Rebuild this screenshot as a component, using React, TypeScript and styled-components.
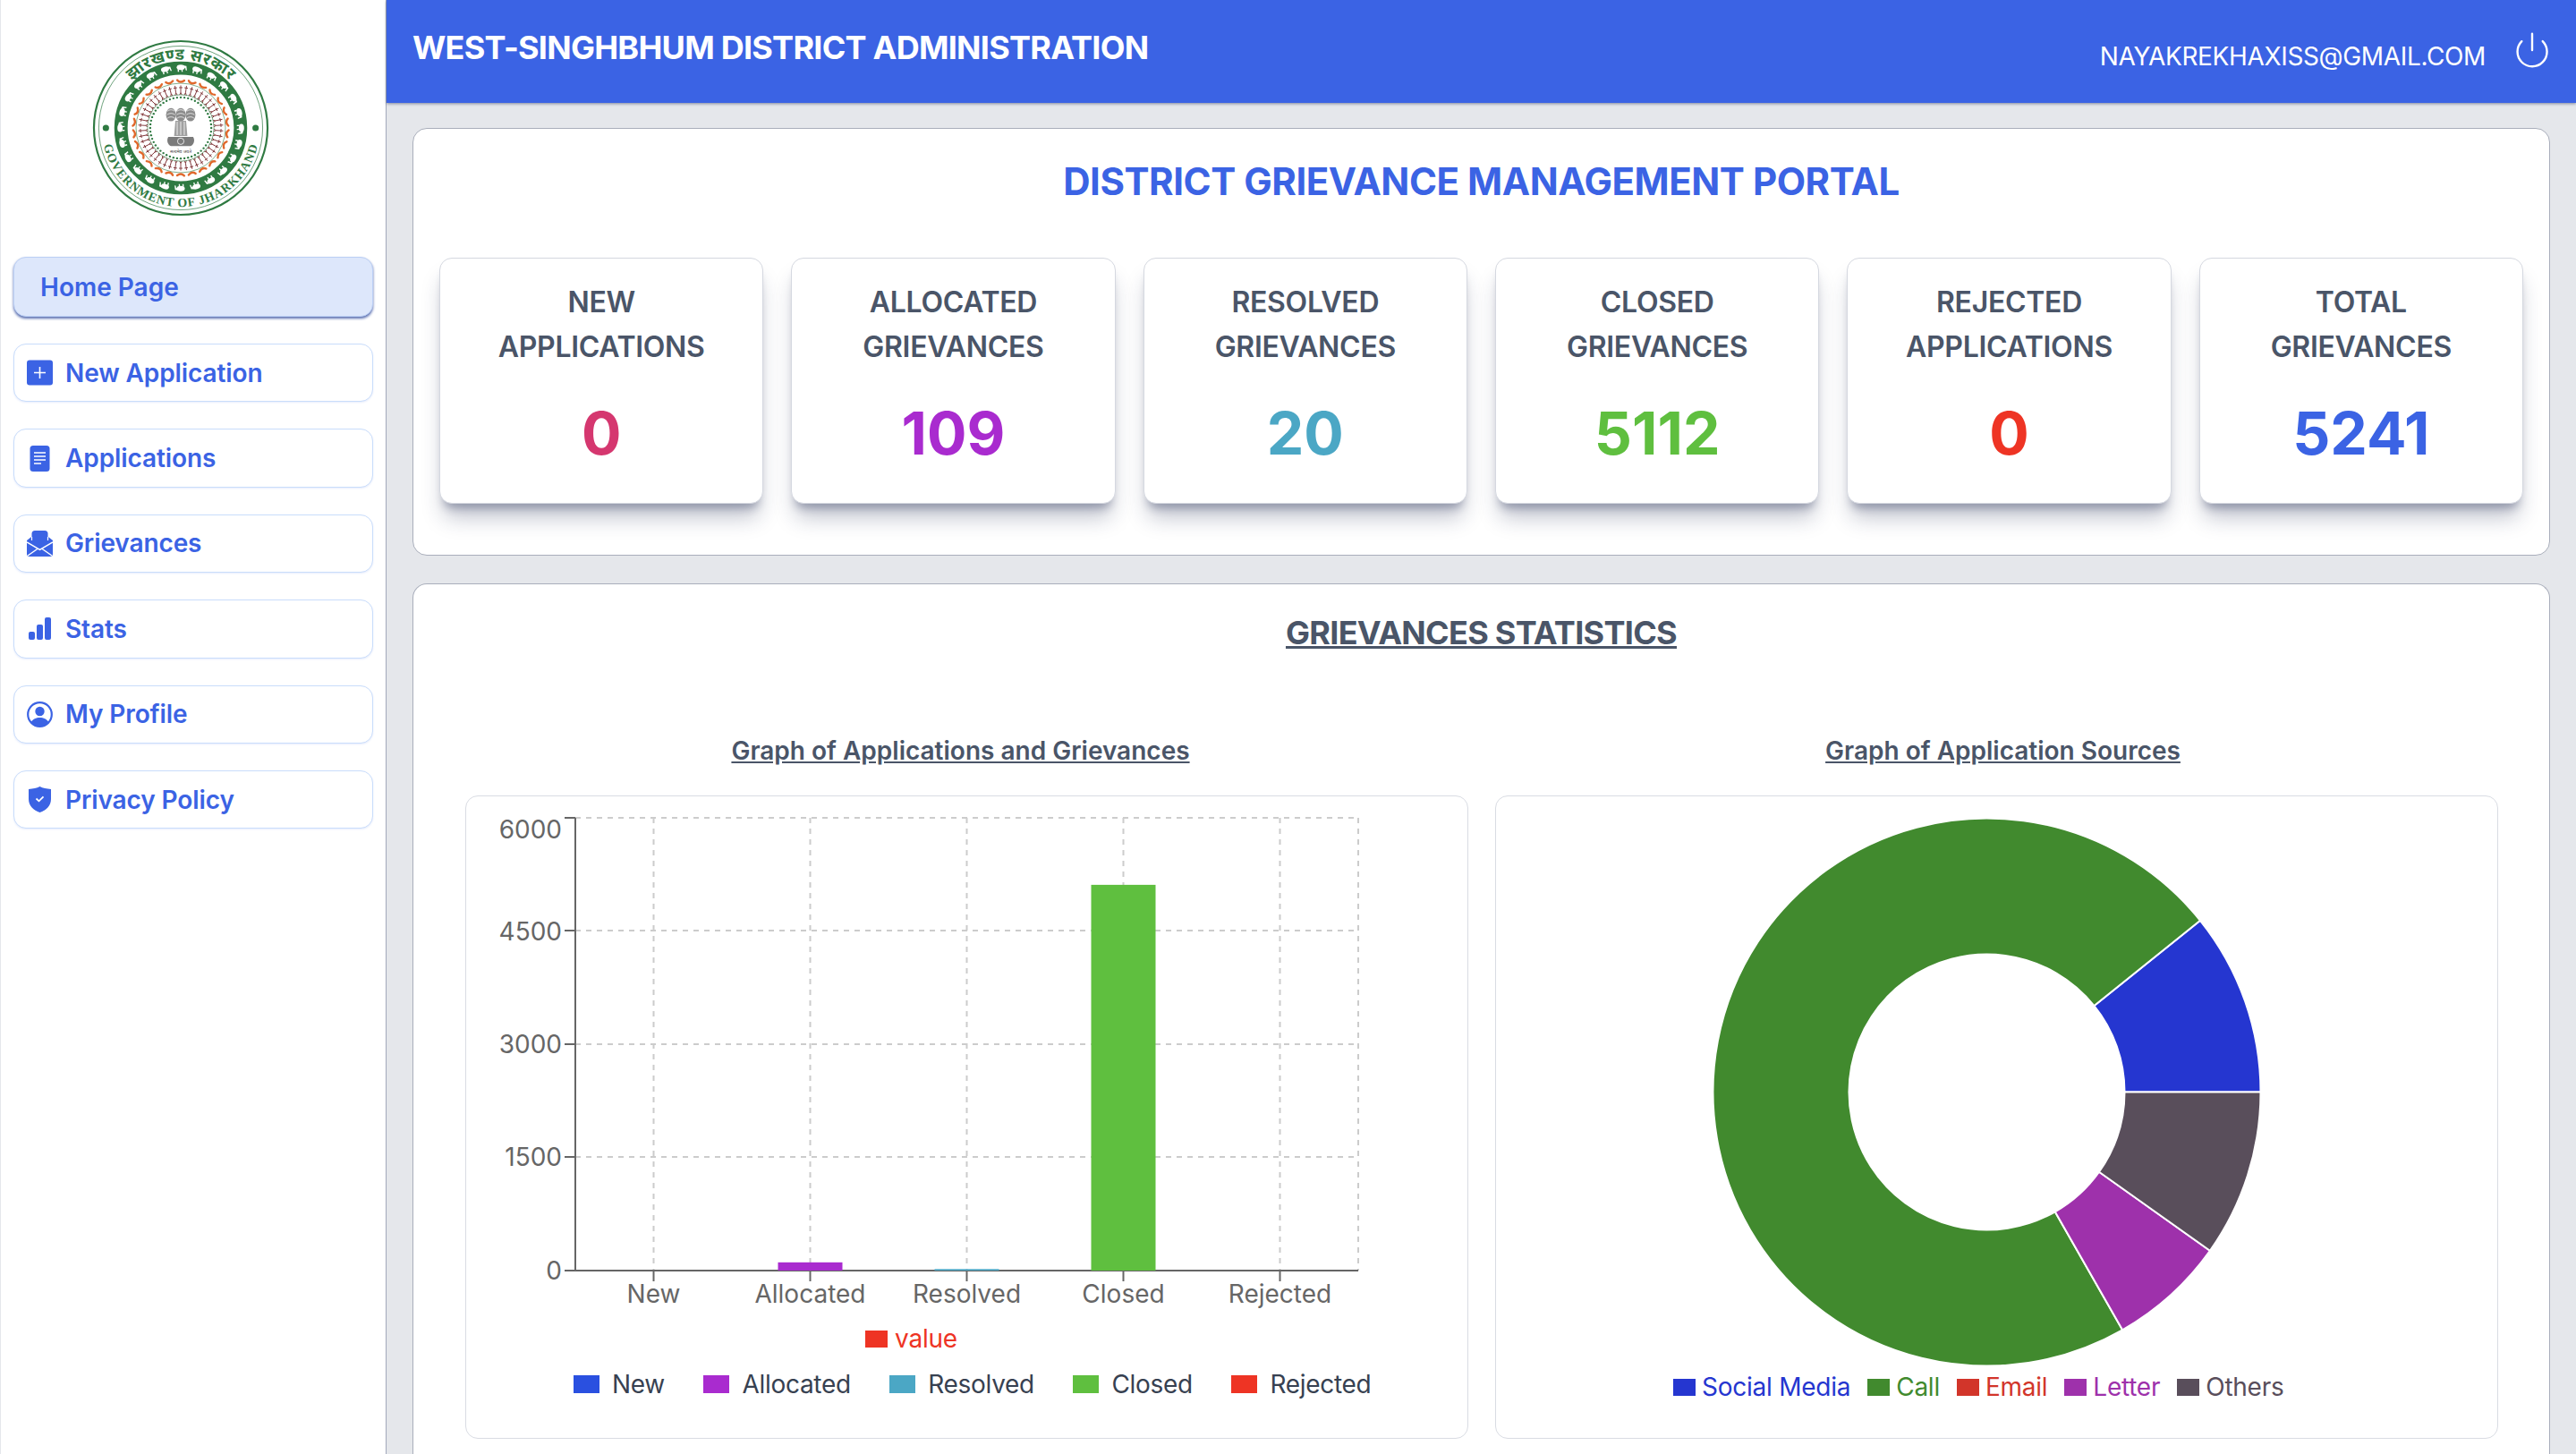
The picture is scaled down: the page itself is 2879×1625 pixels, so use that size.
import React from 'react'
import styled, { createGlobalStyle } from 'styled-components'
import { Power } from 'lucide-react'

const BLUE = '#3b63e4'

const GlobalStyle = createGlobalStyle`
  * {
    box-sizing: border-box;
  }
  html, body {
    margin: 0;
    height: 100%;
    overflow: hidden;
    background: #e5e7eb;
    font-family: Inter, "Liberation Sans", sans-serif;
  }
`

const stats = [
  { top: 'NEW', bottom: 'APPLICATIONS', value: '0', color: '#d5376f' },
  { top: 'ALLOCATED', bottom: 'GRIEVANCES', value: '109', color: '#a92bcf' },
  { top: 'RESOLVED', bottom: 'GRIEVANCES', value: '20', color: '#4ba7c5' },
  { top: 'CLOSED', bottom: 'GRIEVANCES', value: '5112', color: '#5fbf3f' },
  { top: 'REJECTED', bottom: 'APPLICATIONS', value: '0', color: '#ee3424' },
  { top: 'TOTAL', bottom: 'GRIEVANCES', value: '5241', color: BLUE },
]

const bars = [
  { label: 'New', value: 0, color: '#2a50e0' },
  { label: 'Allocated', value: 109, color: '#a92bcf' },
  { label: 'Resolved', value: 20, color: '#4ba7c5' },
  { label: 'Closed', value: 5112, color: '#5fbf3f' },
  { label: 'Rejected', value: 0, color: '#ee3424' },
]

const sources = [
  { label: 'Social Media', color: '#2536d0', from: 0, to: 38.8 },
  { label: 'Call', color: '#418a2e', from: 38.8, to: 299.7 },
  { label: 'Email', color: '#d2352a', from: 299.7, to: 299.7 },
  { label: 'Letter', color: '#9e31ab', from: 299.7, to: 324.6 },
  { label: 'Others', color: '#594e5b', from: 324.6, to: 360 },
]

function polar(cx: number, cy: number, r: number, deg: number) {
  const a = (deg * Math.PI) / 180
  return [cx + r * Math.cos(a), cy - r * Math.sin(a)]
}

function slicePath(cx: number, cy: number, r0: number, r1: number, from: number, to: number) {
  const [x1, y1] = polar(cx, cy, r1, from)
  const [x2, y2] = polar(cx, cy, r1, to)
  const [x3, y3] = polar(cx, cy, r0, to)
  const [x4, y4] = polar(cx, cy, r0, from)
  const large = to - from > 180 ? 1 : 0
  return `M${x1} ${y1}A${r1} ${r1} 0 ${large} 0 ${x2} ${y2}L${x3} ${y3}A${r0} ${r0} 0 ${large} 1 ${x4} ${y4}Z`
}

function range(n: number) {
  return Array.from({ length: n }, (_, i) => i)
}

function Lion({ x }: { x: number }) {
  return (
    <g>
      <ellipse cx={x} cy="85" rx="5.6" ry="7.5" fill="#8b8b8b" />
      <path d={`M${x - 4} 81c2-2 6-2 8 0M${x - 4.5} 85c3-2 6-2 9 0M${x - 4} 89c2-2 6-2 8 0`} stroke="#fff" strokeWidth="0.7" fill="none" />
    </g>
  )
}

function Emblem() {
  const green = '#2f7a42'
  return (
    <svg width="198" height="198" viewBox="0 0 200 200">
      <defs>
        <path id="arcTop" d="M23 100a77 77 0 0 1 154 0" />
        <path id="arcBottom" d="M11 100a89 89 0 0 0 178 0" />
      </defs>
      <circle cx="100" cy="100" r="98" fill="#fff" stroke={green} strokeWidth="2.2" />
      <circle cx="100" cy="100" r="92.5" fill="none" stroke={green} strokeWidth="0.7" />
      <circle cx="15.5" cy="100" r="3.6" fill={green} />
      <circle cx="184.5" cy="100" r="3.6" fill={green} />
      <text fontFamily="'Noto Sans', 'Liberation Sans', sans-serif" fontSize="18" fontWeight="700" fill={green} letterSpacing="0.6">
        <textPath href="#arcTop" startOffset="50%" textAnchor="middle">झारखण्ड सरकार</textPath>
      </text>
      <text fontFamily="'Liberation Serif', serif" fontSize="14" fontWeight="700" fill={green} letterSpacing="0.9">
        <textPath href="#arcBottom" startOffset="50%" textAnchor="middle">GOVERNMENT OF JHARKHAND</textPath>
      </text>
      <circle cx="100" cy="100" r="67.5" fill="none" stroke={green} strokeWidth="15" />
      {range(24).map((i) => (
        <g key={i} transform={`rotate(${i * 15} 100 100)`} fill="#fff">
          <ellipse cx="100" cy="31.5" rx="4.6" ry="3" />
          <path d="M103 29.5l3.4.6.6 5-1.4-.2-.5-2.8-2.2-.4zM96.5 33.5l.2 3.2 1.4-.1-.1-2.6zM100.8 33.5l.2 3.2 1.3-.1-.2-2.9z" />
        </g>
      ))}
      <circle cx="100" cy="100" r="50.5" fill="none" stroke={green} strokeWidth="0.6" />
      {range(26).map((i) => (
        <path
          key={i}
          transform={`rotate(${(i * 360) / 26} 100 100)`}
          d="M96 46c2 2.4 5 2.6 8 .4"
          fill="none"
          stroke="#e0682c"
          strokeWidth="2.4"
          strokeLinecap="round"
        />
      ))}
      {range(46).map((i) => (
        <g key={i} transform={`rotate(${(i * 360) / 46} 100 100)`} stroke="#7d3033" strokeWidth="0.9" fill="none">
          <path d="M100 52v8M98 54.5h4M100 60l-1.4 3M100 60l1.4 3" />
        </g>
      ))}
      <circle cx="100" cy="100" r="37.5" fill="#fff" stroke={green} strokeWidth="0.6" />
      {range(52).map((i) => {
        const [x, y] = polar(100, 100, 34.5, (i * 360) / 52)
        return <circle key={i} cx={x} cy={y} r="1.2" fill={green} />
      })}
      <Lion x={89} />
      <Lion x={111} />
      <Lion x={100} />
      <path d="M94 92h12l1.5 17h-15z" fill="#a0a0a0" />
      <path d="M96 93v15M100 93v15M104 93v15" stroke="#fff" strokeWidth="0.8" />
      <path d="M86 110h28c2.5 4 .5 9-3 10.5H89c-3.500-1.500-5.500-6.500-3-10.500z" fill="#7b7b7b" />
      <circle cx="100" cy="115" r="3.6" fill="none" stroke="#fff" strokeWidth="0.8" />
      <text x="100" y="128.5" textAnchor="middle" fontSize="5" fontFamily="'Noto Sans', sans-serif" fill="#444">सत्यमेव जयते</text>
    </svg>
  )
}

function PlusIcon() {
  return (
    <svg width="29" height="29" viewBox="0 0 29 29">
      <rect y="0.5" width="29" height="28" rx="3" fill={BLUE} />
      <path d="M14.5 8v13M8 14.5h13" stroke="#fff" strokeWidth="1.6" />
    </svg>
  )
}

function DocIcon() {
  return (
    <svg width="29" height="29" viewBox="0 0 29 29">
      <rect x="3.5" width="22" height="29" rx="3.5" fill={BLUE} />
      <path d="M8 8h13M8 12h13M8 16h13M8 20h8" stroke="#fff" strokeWidth="1.6" />
    </svg>
  )
}

function MailIcon() {
  return (
    <svg width="29" height="29" viewBox="0 0 29 29">
      <path d="M0 11l5-4h19l5 4v15a3 3 0 0 1-3 3H3a3 3 0 0 1-3-3z" fill={BLUE} />
      <rect x="5.5" width="18" height="15" rx="3.5" fill={BLUE} />
      <path d="M0 13l14.5 8.5L29 13M1 28l11.5-8M28 28l-11.5-8" stroke="#fff" strokeWidth="1.5" fill="none" />
      <path d="M5.5 7v4M23.5 7v4" stroke="#fff" strokeWidth="1.2" />
    </svg>
  )
}

function BarsIcon() {
  return (
    <svg width="29" height="29" viewBox="0 0 29 29">
      <rect x="2" y="18" width="7" height="9" rx="2" fill={BLUE} />
      <rect x="11" y="10" width="7" height="17" rx="2" fill={BLUE} />
      <rect x="20" y="2" width="7" height="25" rx="2" fill={BLUE} />
    </svg>
  )
}

function ProfileIcon() {
  return (
    <svg width="29" height="29" viewBox="0 0 29 29">
      <circle cx="14.5" cy="14.5" r="13.3" fill="none" stroke={BLUE} strokeWidth="2.2" />
      <circle cx="14.5" cy="11" r="5.2" fill={BLUE} />
      <path d="M4.5 23.5c2-4 6-5.5 10-5.5s8 1.5 10 5.5c-2.5 2.8-6 4.500-10 4.500s-7.500-1.700-10-4.500z" fill={BLUE} />
    </svg>
  )
}

function ShieldIcon() {
  return (
    <svg width="29" height="29" viewBox="0 0 29 29">
      <path d="M14.5 0c3.5 1.8 7.5 2.5 12.5 3v11c0 7.5-5.5 12.500-12.500 15C7.500 26.500 2 21.500 2 14V3C7 2.500 11 1.800 14.500 0z" fill={BLUE} />
      <path d="M10.5 13.5l3 2.8 5-5" stroke="#fff" strokeWidth="1.8" fill="none" />
    </svg>
  )
}

const navItems = [
  { label: 'New Application', icon: <PlusIcon /> },
  { label: 'Applications', icon: <DocIcon /> },
  { label: 'Grievances', icon: <MailIcon /> },
  { label: 'Stats', icon: <BarsIcon /> },
  { label: 'My Profile', icon: <ProfileIcon /> },
  { label: 'Privacy Policy', icon: <ShieldIcon /> },
]

function BarChart() {
  const left = 122
  const right = 997
  const top = 24
  const bottom = 530
  const step = 175
  const yTicks = [
    { label: '6000', y: top, textY: 37 },
    { label: '4500', y: 150, textY: 151 },
    { label: '3000', y: 277, textY: 277 },
    { label: '1500', y: 403, textY: 403 },
    { label: '0', y: bottom, textY: 530 },
  ]
  return (
    <ChartSvg width="1119" height="575" viewBox="0 0 1119 575">
      <g stroke="#ccc" strokeWidth="2" strokeDasharray="6 6">
        {yTicks.slice(0, 4).map((t) => (
          <line key={t.label} x1={left} x2={right} y1={t.y} y2={t.y} />
        ))}
        {bars.map((b, i) => (
          <line key={b.label} x1={left + 87.5 + i * step} x2={left + 87.5 + i * step} y1={top} y2={bottom} />
        ))}
        <line x1={right} x2={right} y1={top} y2={bottom} />
      </g>
      <g stroke="#666" strokeWidth="2">
        <line x1={left} x2={left} y1={top} y2={bottom} />
        <line x1={left} x2={right} y1={bottom} y2={bottom} />
        {yTicks.map((t) => (
          <line key={t.label} x1={left - 12} x2={left} y1={t.y} y2={t.y} />
        ))}
        {bars.map((b, i) => (
          <line key={b.label} x1={left + 87.5 + i * step} x2={left + 87.5 + i * step} y1={bottom} y2={bottom + 12} />
        ))}
      </g>
      {bars.filter((b) => b.value > 0).map((b) => {
        const i = bars.indexOf(b)
        const h = (b.value / 6000) * (bottom - top)
        return (
          <rect key={b.label} x={left + 51.5 + i * step} y={bottom - h} width="72" height={h} fill={b.color} />
        )
      })}
      <g fill="#666" fontSize="28" fontFamily="Inter, sans-serif">
        {yTicks.map((t) => (
          <text key={t.label} x={left - 15} y={t.textY} textAnchor="end" dominantBaseline="central">{t.label}</text>
        ))}
        {bars.map((b, i) => (
          <text key={b.label} x={left + 87.5 + i * step} y={556} textAnchor="middle" dominantBaseline="central">{b.label}</text>
        ))}
      </g>
    </ChartSvg>
  )
}

function Donut() {
  const cx = 548.5
  const cy = 330.5
  return (
    <ChartSvg width="1119" height="640" viewBox="0 0 1119 640">
      {sources.filter((s) => s.to > s.from).map((s) => (
        <path key={s.label} d={slicePath(cx, cy, 154, 306, s.from, s.to)} fill={s.color} stroke="#fff" strokeWidth="2" />
      ))}
    </ChartSvg>
  )
}

export default function App() {
  return (
    <>
      <GlobalStyle />
      <Page>
        <Sidebar>
          <LogoBox>
            <Emblem />
          </LogoBox>
          <NavList>
            <HomeLink>Home Page</HomeLink>
            {navItems.map((item) => (
              <NavItem key={item.label}>
                {item.icon}
                {item.label}
              </NavItem>
            ))}
          </NavList>
        </Sidebar>
        <Main>
          <Header>
            <HeaderTitle>WEST-SINGHBHUM DISTRICT ADMINISTRATION</HeaderTitle>
            <HeaderRight>
              <Email>NAYAKREKHAXISS@GMAIL.COM</Email>
              <PowerButton>
                <Power size={44} strokeWidth={1.3} />
              </PowerButton>
            </HeaderRight>
          </Header>
          <Content>
            <Panel>
              <PortalTitle>DISTRICT GRIEVANCE MANAGEMENT PORTAL</PortalTitle>
              <CardRow>
                {stats.map((s) => (
                  <StatCard key={s.top}>
                    <StatLabel>{s.top}</StatLabel>
                    <StatLabel>{s.bottom}</StatLabel>
                    <StatValue $color={s.color}>{s.value}</StatValue>
                  </StatCard>
                ))}
              </CardRow>
            </Panel>
            <StatsPanel>
              <StatsTitle>GRIEVANCES STATISTICS</StatsTitle>
              <Graphs>
                <div>
                  <GraphTitle $shift={-7}>Graph of Applications and Grievances</GraphTitle>
                  <ChartCard>
                    <BarChart />
                    <ValueLegend>
                      <Swatch $color="#ee3424" />
                      value
                    </ValueLegend>
                    <BarLegend>
                      {bars.map((b) => (
                        <BarLegendItem key={b.label}>
                          <BarSwatch $color={b.color} />
                          {b.label}
                        </BarLegendItem>
                      ))}
                    </BarLegend>
                  </ChartCard>
                </div>
                <div>
                  <GraphTitle $shift={7}>Graph of Application Sources</GraphTitle>
                  <ChartCard>
                    <Donut />
                    <SourceLegend>
                      {sources.map((s) => (
                        <SourceItem key={s.label} $color={s.color}>
                          <Swatch $color={s.color} />
                          {s.label}
                        </SourceItem>
                      ))}
                    </SourceLegend>
                  </ChartCard>
                </div>
              </Graphs>
            </StatsPanel>
          </Content>
        </Main>
      </Page>
    </>
  )
}

const Page = styled.div`
  display: flex;
  width: 2879px;
  height: 1625px;
  overflow: hidden;
`

const Sidebar = styled.aside`
  flex: 0 0 432px;
  background: #fff;
  border-left: 1px solid #e5e7eb;
  border-right: 1px solid #a3a9bb;
  padding: 44px 14px 0;
`

const LogoBox = styled.div`
  display: flex;
  justify-content: center;
  padding-right: 29px;
  margin-bottom: 45px;
`

const NavList = styled.nav`
  display: flex;
  flex-direction: column;
  gap: 30px;
`

const HomeLink = styled.a`
  display: flex;
  align-items: center;
  height: 67px;
  padding-left: 29px;
  border: 1px solid #bcd0f5;
  border-radius: 14px;
  background: #dde7fb;
  box-shadow: 0 2px 3px #5a6fb0;
  color: ${BLUE};
  font-size: 28px;
  font-weight: 600;
`

const NavItem = styled.a`
  display: flex;
  align-items: center;
  gap: 14px;
  height: 65.4px;
  padding-left: 14px;
  border: 1px solid #c9ddfb;
  border-radius: 14px;
  background: #fff;
  box-shadow: 0 1px 2px rgba(59, 99, 228, 0.12);
  color: ${BLUE};
  font-size: 28px;
  font-weight: 600;
  letter-spacing: -0.1px;
`

const Main = styled.main`
  flex: 1;
  min-width: 0;
  display: flex;
  flex-direction: column;
`

const Header = styled.header`
  flex: 0 0 115px;
  display: flex;
  justify-content: space-between;
  align-items: flex-start;
  padding: 31px 27px 0 29px;
  background: ${BLUE};
  box-shadow: 0 1px 3px rgba(30, 41, 80, 0.5);
  color: #fff;
`

const HeaderTitle = styled.h1`
  margin: 0;
  font-size: 36px;
  line-height: 44px;
  font-weight: 700;
  letter-spacing: -0.75px;
`

const HeaderRight = styled.div`
  display: flex;
  align-items: flex-start;
  gap: 30px;
`

const Email = styled.span`
  margin-top: 12px;
  font-size: 28px;
  line-height: 40px;
  font-weight: 400;
  letter-spacing: -0.35px;
`

const PowerButton = styled.span`
  display: block;
  margin-top: 3px;
  height: 44px;
`

const Content = styled.div`
  flex: 1;
  display: flex;
  flex-direction: column;
  gap: 31px;
  padding: 28px 29px 0 29px;
`

const Panel = styled.section`
  height: 478px;
  padding: 0 29px;
  background: #fff;
  border: 1px solid #a9aebb;
  border-radius: 16px;
`

const PortalTitle = styled.h2`
  margin: 32px 0 58px;
  text-align: center;
  color: ${BLUE};
  font-size: 42px;
  line-height: 54px;
  font-weight: 700;
  letter-spacing: -0.45px;
`

const CardRow = styled.div`
  display: grid;
  grid-template-columns: repeat(6, 1fr);
  gap: 31px;
`

const StatCard = styled.div`
  height: 275px;
  padding-top: 24px;
  text-align: center;
  background: #fff;
  border: 1px solid #d5d8e0;
  border-radius: 14px;
  box-shadow: 0 20px 25px -5px rgba(30, 41, 80, 0.28), 0 10px 10px -5px rgba(30, 41, 80, 0.3);
`

const StatLabel = styled.div`
  color: #4a5568;
  font-size: 32px;
  line-height: 50px;
  font-weight: 600;
  letter-spacing: -0.3px;
`

const StatValue = styled.div<{ $color: string }>`
  margin-top: 39px;
  color: ${({ $color }) => $color};
  font-size: 66px;
  line-height: 64px;
  font-weight: 700;
`

const StatsPanel = styled.section`
  flex: 1;
  padding: 0 58px;
  background: #fff;
  border: 1px solid #a9aebb;
  border-bottom: 0;
  border-radius: 16px 16px 0 0;
`

const StatsTitle = styled.h3`
  margin: 34px 0 94px;
  text-align: center;
  color: #4a5568;
  font-size: 36px;
  line-height: 40px;
  font-weight: 700;
  letter-spacing: -0.7px;
  text-decoration: underline;
`

const Graphs = styled.div`
  display: grid;
  grid-template-columns: 1fr 1fr;
  gap: 30px;
`

const GraphTitle = styled.h4<{ $shift: number }>`
  margin: 0 0 32px;
  padding: ${({ $shift }) => ($shift < 0 ? `0 ${-$shift * 2}px 0 0` : `0 0 0 ${$shift * 2}px`)};
  text-align: center;
  color: #4a5568;
  font-size: 28px;
  line-height: 36px;
  font-weight: 600;
  text-decoration: underline;
`

const ChartCard = styled.div`
  height: 719px;
  background: #fff;
  border: 1px solid #d9dce3;
  border-radius: 14px;
`

const ChartSvg = styled.svg`
  display: block;
`

const Swatch = styled.i<{ $color: string }>`
  display: block;
  width: 25px;
  height: 19px;
  background: ${({ $color }) => $color};
`

const ValueLegend = styled.div`
  display: flex;
  align-items: center;
  gap: 8px;
  height: 40px;
  margin-top: 11px;
  padding-left: 446px;
  color: #ee3424;
  font-size: 28px;
  letter-spacing: -0.2px;
`

const BarLegend = styled.div`
  display: flex;
  align-items: center;
  gap: 43.5px;
  margin-top: 10.5px;
  height: 40px;
  padding-left: 120px;
  color: #374151;
  font-size: 28px;
  letter-spacing: -0.3px;
`

const BarLegendItem = styled.span`
  display: flex;
  align-items: center;
  gap: 14px;
`

const BarSwatch = styled.i<{ $color: string }>`
  display: block;
  width: 29px;
  height: 20px;
  background: ${({ $color }) => $color};
`

const SourceLegend = styled.div`
  display: flex;
  align-items: center;
  gap: 19px;
  height: 40px;
  padding-left: 198px;
  font-size: 28px;
  letter-spacing: -0.25px;
`

const SourceItem = styled.span<{ $color: string }>`
  display: flex;
  align-items: center;
  gap: 7px;
  color: ${({ $color }) => $color};
`
